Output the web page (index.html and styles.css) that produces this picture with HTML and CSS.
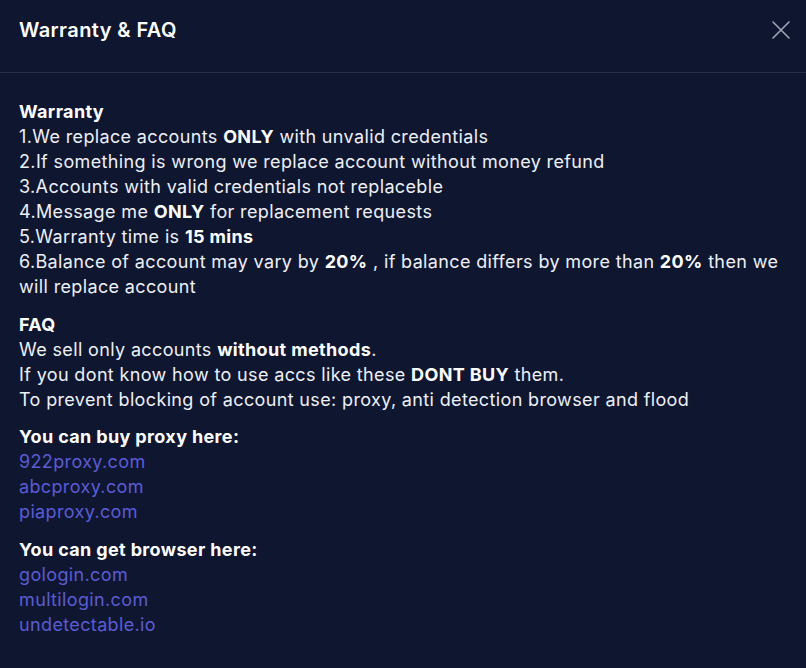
FILE: index.html
```html
<!DOCTYPE html>
<html lang="en">
<head>
<meta charset="utf-8">
<title>Warranty &amp; FAQ</title>
<link rel="stylesheet" href="styles.css">
</head>
<body>
<div class="modal">
  <header class="modal-header">
    <h2 class="modal-title">Warranty &amp; FAQ</h2>
    <button class="close-btn" aria-label="Close">
      <svg width="18" height="18" viewBox="0 0 18 18" fill="none" stroke="currentColor" stroke-width="1.6" stroke-linecap="round"><path d="M1 1L17 17M17 1L1 17"/></svg>
    </button>
  </header>
  <div class="modal-body">
    <p class="block">
      <b>Warranty</b><br>
      1.We replace accounts <b>ONLY</b> with unvalid credentials<br>
      2.If something is wrong we replace account without money refund<br>
      3.Accounts with valid credentials not replaceble<br>
      4.Message me <b>ONLY</b> for replacement requests<br>
      5.Warranty time is <b>15 mins</b><br>
      6.Balance of account may vary by <b>20%</b> , if balance differs by more than <b>20%</b> then we will replace account
    </p>
    <p class="block">
      <b>FAQ</b><br>
      We sell only accounts <b>without methods</b>.<br>
      If you dont know how to use accs like these <b>DONT BUY</b> them.<br>
      To prevent blocking of account use: proxy, anti detection browser and flood
    </p>
    <p class="block">
      <b>You can buy proxy here:</b><br>
      <a href="#">922proxy.com</a><br>
      <a href="#">abcproxy.com</a><br>
      <a href="#">piaproxy.com</a>
    </p>
    <p class="block">
      <b>You can get browser here:</b><br>
      <a href="#">gologin.com</a><br>
      <a href="#">multilogin.com</a><br>
      <a href="#">undetectable.io</a>
    </p>
  </div>
</div>
</body>
</html>
```
FILE: styles.css
```css
html, body {
  margin: 0;
  padding: 0;
  background: #0f1730;
}
body {
  font-family: Inter, "Noto Sans", sans-serif;
  color: #eef0f5;
  width: 806px;
  height: 668px;
  overflow: hidden;
}
.modal {
  background: #0f1730;
  height: 668px;
}
.modal-header {
  box-sizing: border-box;
  height: 73px;
  border-bottom: 1px solid #26304a;
  display: flex;
  align-items: center;
  justify-content: space-between;
  padding: 0 16px 12px 19px;
}
.modal-title {
  margin: 0;
  font-size: 20px;
  font-weight: 600;
  color: #ffffff;
  letter-spacing: 0.4px;
}
.close-btn {
  background: none;
  border: none;
  padding: 0;
  color: #a0a6b5;
  display: flex;
  cursor: pointer;
}
.modal-body {
  padding: 26px 19px 0 19px;
}
.block {
  margin: 0 0 12.5px 0;
  font-size: 18px;
  line-height: 25px;
  letter-spacing: 0.36px;
}
.block b {
  font-weight: 700;
  color: #ffffff;
}
.block a {
  color: #5b5bd6;
  text-decoration: none;
}
```
